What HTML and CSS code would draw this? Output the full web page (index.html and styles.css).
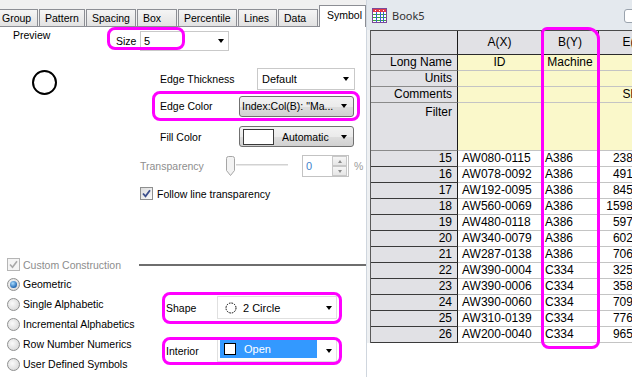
FILE: index.html
```html
<!DOCTYPE html>
<html>
<head>
<meta charset="utf-8">
<link rel="stylesheet" href="styles.css">
</head>
<body>
<div class="app">
  <section class="dlg">
    <div class="tabs">
      <div class="tab t-group">Group</div>
      <div class="tab t-pattern">Pattern</div>
      <div class="tab t-spacing">Spacing</div>
      <div class="tab t-box">Box</div>
      <div class="tab t-perc">Percentile</div>
      <div class="tab t-lines">Lines</div>
      <div class="tab t-data">Data</div>
      <div class="tab t-symbol sel">Symbol</div>
    </div>
    <div class="page">
      <div class="size-row">
        <span class="preview-lbl">Preview</span>
        <span class="size-lbl">Size</span>
        <div class="combo size-combo"><span class="val">5</span><span class="arr"></span></div>
      </div>
      <div class="main">
        <div class="preview">
          <svg width="27" height="27" viewBox="0 0 27 27"><circle cx="13.5" cy="13.5" r="11.5" fill="none" stroke="#000" stroke-width="2"/></svg>
        </div>
        <div class="form">
          <div class="frow r1"><span class="flbl w117">Edge Thickness</span><div class="combo thick"><span class="val">Default</span><span class="arr"></span></div></div>
          <div class="frow r2"><span class="flbl w99">Edge Color</span><div class="btn"><span class="val">Index:Col(B): "Ma...</span><span class="arr"></span></div></div>
          <div class="frow r3"><span class="flbl w99">Fill Color</span><div class="btn"><span class="swatch"></span><span class="val auto">Automatic</span><span class="arr"></span></div></div>
          <div class="frow r4">
            <span class="flbl tl">Transparency</span>
            <div class="slider">
              <svg class="thumb" width="11" height="21" viewBox="0 0 11 21"><path d="M1.5 2.5 Q1.5 0.5 3.5 0.5 H7.5 Q9.5 0.5 9.5 2.5 V14.5 L5.5 19.5 L1.5 14.5 Z" fill="#f3f3f3" stroke="#a6a6a6"/></svg>
              <span class="track"></span>
            </div>
            <div class="spin"><span class="sval">0</span><span class="sbtns"><span class="sb"><span class="up"></span></span><span class="sb"><span class="dn"></span></span></span></div>
            <span class="pct">%</span>
          </div>
          <div class="frow r5">
            <span class="chk"><svg width="11" height="11" viewBox="0 0 11 11"><path d="M2 5.5 L4.5 8.3 L9 2.2" fill="none" stroke="#3c4f8c" stroke-width="1.8"/></svg></span>
            <span class="chk-lbl">Follow line transparency</span>
          </div>
        </div>
      </div>
      <div class="cc-row">
        <span class="chk dis"><svg width="11" height="11" viewBox="0 0 11 11"><path d="M2 5.5 L4.5 8.3 L9 2.2" fill="none" stroke="#a8a8a8" stroke-width="1.6"/></svg></span>
        <span class="cc-lbl">Custom Construction</span>
        <span class="cc-line"></span>
      </div>
      <div class="lower">
        <div class="radios">
          <div class="radio-row"><span class="radio on"></span><span class="rlbl">Geometric</span></div>
          <div class="radio-row"><span class="radio"></span><span class="rlbl">Single Alphabetic</span></div>
          <div class="radio-row"><span class="radio"></span><span class="rlbl">Incremental Alphabetics</span></div>
          <div class="radio-row"><span class="radio"></span><span class="rlbl">Row Number Numerics</span></div>
          <div class="radio-row"><span class="radio"></span><span class="rlbl">User Defined Symbols</span></div>
        </div>
        <div class="shapes">
          <div class="srow">
            <span class="slbl">Shape</span>
            <div class="scombo">
              <svg class="sicon" width="12" height="12" viewBox="0 0 12 12"><circle cx="6" cy="6" r="5" fill="none" stroke="#000" stroke-width="1" stroke-dasharray="1.6 1"/></svg>
              <span class="stext">2 Circle</span>
              <span class="arr"></span>
            </div>
          </div>
          <div class="srow s2">
            <span class="slbl">Interior</span>
            <div class="scombo">
              <span class="hl"><span class="sq"></span><span class="otext">Open</span></span>
              <span class="arr"></span>
            </div>
          </div>
        </div>
      </div>
    </div>
  </section>
  <section class="sheet">
    <div class="titlebar">
      <svg class="bookicon" width="15" height="15" viewBox="0 0 15 15">
        <rect x="0.5" y="0.5" width="14" height="14" fill="#fff" stroke="#7b4a9a"/>
        <rect x="1" y="1" width="13" height="3" fill="#e23a4a"/>
        <path d="M3 2.5h1M7 2.5h1M11 2.5h1" stroke="#fff"/>
        <path d="M1 6.5h13M1 9.5h13M1 12.5h13" stroke="#3caa3c"/>
        <path d="M4.5 4v10M8.5 4v10M11.5 4v10" stroke="#3b5bd8"/>
      </svg>
      <span class="btitle">Book5</span>
      <span class="minbtn"></span>
    </div>
    <div class="gridarea">
      <div class="grid">
        <div class="row hdr"><div class="c rh"></div><div class="c ch ca">A(X)</div><div class="c ch cb">B(Y)</div><div class="c ch cc">E(Y)</div></div>
        <div class="row lab"><div class="c rh">Long Name</div><div class="c ly ca ctr">ID</div><div class="c ly cb ctr">Machine</div><div class="c ly cc ctr"></div></div>
        <div class="row lab"><div class="c rh">Units</div><div class="c ly ca"></div><div class="c ly cb"></div><div class="c ly cc"></div></div>
        <div class="row lab"><div class="c rh">Comments</div><div class="c ly ca"></div><div class="c ly cb"></div><div class="c ly cc ctr">Shift</div></div>
        <div class="row lab filter"><div class="c rh top">Filter</div><div class="c ly ca"></div><div class="c ly cb"></div><div class="c ly cc"></div></div>
        <div class="row dat"><div class="c rh">15</div><div class="c d ca">AW080-0115</div><div class="c d cb">A386</div><div class="c d cc num">238.4167</div></div>
        <div class="row dat"><div class="c rh">16</div><div class="c d ca">AW078-0092</div><div class="c d cb">A386</div><div class="c d cc num">491.2500</div></div>
        <div class="row dat"><div class="c rh">17</div><div class="c d ca">AW192-0095</div><div class="c d cb">A386</div><div class="c d cc num">845.0833</div></div>
        <div class="row dat"><div class="c rh">18</div><div class="c d ca">AW560-0069</div><div class="c d cb">A386</div><div class="c d cc num">1598.3333</div></div>
        <div class="row dat"><div class="c rh">19</div><div class="c d ca">AW480-0118</div><div class="c d cb">A386</div><div class="c d cc num">597.1667</div></div>
        <div class="row dat"><div class="c rh">20</div><div class="c d ca">AW340-0079</div><div class="c d cb">A386</div><div class="c d cc num">602.4167</div></div>
        <div class="row dat"><div class="c rh">21</div><div class="c d ca">AW287-0138</div><div class="c d cb">A386</div><div class="c d cc num">706.8333</div></div>
        <div class="row dat"><div class="c rh">22</div><div class="c d ca">AW390-0004</div><div class="c d cb">C334</div><div class="c d cc num">325.9167</div></div>
        <div class="row dat"><div class="c rh">23</div><div class="c d ca">AW390-0006</div><div class="c d cb">C334</div><div class="c d cc num">358.7500</div></div>
        <div class="row dat"><div class="c rh">24</div><div class="c d ca">AW390-0060</div><div class="c d cb">C334</div><div class="c d cc num">709.3333</div></div>
        <div class="row dat"><div class="c rh">25</div><div class="c d ca">AW310-0139</div><div class="c d cb">C334</div><div class="c d cc num">776.2500</div></div>
        <div class="row dat"><div class="c rh">26</div><div class="c d ca">AW200-0040</div><div class="c d cb">C334</div><div class="c d cc num">965.4167</div></div>
      </div>
    </div>
  </section>
</div>
<div class="mark m-size"></div>
<div class="mark m-edge"></div>
<div class="mark m-shape"></div>
<div class="mark m-interior"></div>
<div class="mark m-col"></div>
</body>
</html>
```

FILE: styles.css
```css
* { box-sizing: border-box; }
html, body { margin: 0; padding: 0; }
body {
  width: 632px; height: 377px; overflow: hidden; position: relative;
  font-family: "Liberation Sans", Arial, sans-serif; font-size: 10.5px;
  color: #000; background: #fff;
}
.app { display: flex; height: 377px; }

/* ---------- dialog ---------- */
.dlg { width: 367px; flex: none; display: flex; flex-direction: column; border-right: 1px solid #cfd6de; background: #fff; }
.tabs { height: 27px; background: #f0f0f0; display: flex; align-items: flex-end; gap: 1px; border-bottom: 1px solid #8c8e94; }
.tab {
  height: 17px; display: flex; align-items: center; padding-left: 5px;
  border: 1px solid #8c8e94; border-bottom: none;
  background: linear-gradient(#f5f5f5, #e2e2e2); white-space: nowrap; flex: none;
}
.t-group { width: 38px; border-left: none; padding-left: 2px; }
.t-pattern { width: 46px; }
.t-spacing { width: 50px; }
.t-box { width: 40px; }
.t-perc { width: 59px; }
.t-lines { width: 39px; }
.t-data { width: 40px; }
.t-symbol { width: 47px; }
.tab.sel { height: 22px; margin-bottom: -1px; background: #fff; padding-left: 7px; padding-bottom: 4px; }

.page { flex: 1; }
.size-row { display: flex; height: 19px; margin-top: 4px; }
.preview-lbl { width: 116px; padding-left: 13px; line-height: 13px; margin-top: -2px; align-self: flex-start; }
.size-lbl { width: 24px; align-self: center; padding-top: 1px; }
.combo { display: flex; align-items: center; border: 1px solid #c9c9c9; background: #fff; padding: 0 5px 0 3px; }
.combo .val { flex: 1; }
.size-combo { width: 89px; height: 20px; padding-right: 4px; font-size: 11px; }
.arr { width: 0; height: 0; border-left: 3.5px solid transparent; border-right: 3.5px solid transparent; border-top: 4px solid #000; flex: none; }

.main { display: flex; margin-top: 18px; }
.preview { width: 140px; padding: 1px 0 0 31px; flex: none; }
.preview svg { display: block; }
.form { width: 226px; display: flex; flex-direction: column; }
.frow { display: flex; align-items: center; }
.flbl { flex: none; }
.w117 { width: 117px; padding-left: 20px; }
.w99 { width: 99px; padding-left: 20px; }
.r1 { height: 22px; }
.thick { width: 98px; height: 22px; padding-left: 4px; padding-right: 5px; font-size: 11px; }
.r2 { height: 22px; margin-top: 5px; }
.r3 { height: 21px; margin-top: 9px; }
.btn {
  width: 115px; height: 21px; display: flex; align-items: center;
  border: 1px solid #707070; border-radius: 3px;
  background: linear-gradient(#f3f3f3 0%, #ebebeb 50%, #dedede 50%, #d0d0d0 100%);
  padding: 0 6px 0 2px; white-space: nowrap;
}
.btn .val { flex: 1; overflow: hidden; }
.swatch { width: 31px; height: 16px; background: #fff; border: 1px solid #3a3a3a; margin-left: 1px; margin-right: 8px; flex: none; }
.r4 { height: 22px; margin-top: 8px; }
.tl { width: 85px; color: #8e8e8e; }
.slider { width: 63px; display: flex; align-items: center; margin-right: 14px; flex: none; }
.thumb { display: block; flex: none; }
.track { flex: 1; height: 2px; background: #d2d2d2; border-bottom: 1px solid #e8e8e8; margin-top: -3px; }
.spin { width: 47px; height: 22px; border: 1px solid #c3c3c3; display: flex; align-items: center; padding-left: 3px; flex: none; }
.sval { flex: 1; color: #3f82cc; font-size: 11px; }
.sbtns { display: flex; flex-direction: column; width: 15px; margin-right: 1px; gap: 0; }
.sb { height: 10px; border: 1px solid #c8c8c8; background: linear-gradient(#f6f6f6, #e6e6e6); display: flex; align-items: center; justify-content: center; }
.up { width: 0; height: 0; border-left: 2.5px solid transparent; border-right: 2.5px solid transparent; border-bottom: 3px solid #8a8a8a; }
.dn { width: 0; height: 0; border-left: 2.5px solid transparent; border-right: 2.5px solid transparent; border-top: 3px solid #8a8a8a; }
.pct { margin-left: 5px; color: #9a9a9a; }
.r5 { height: 13px; margin-top: 10px; }
.chk {
  width: 13px; height: 13px; border: 1px solid #8e8f8f; flex: none;
  background: linear-gradient(135deg, #dcdcdc, #fbfbfb);
  display: flex; align-items: center; justify-content: center;
}
.chk svg { display: block; }
.chk.dis { border-color: #b5b5b5; background: #f4f4f4; }
.chk-lbl { margin-left: 4px; }

.cc-row { display: flex; align-items: center; height: 13px; margin-top: 58px; padding-left: 7px; }
.cc-lbl { width: 116px; margin-left: 3px; color: #8d8d8d; flex: none; }
.cc-line { flex: 1; height: 2px; background: #6e6e6e; margin-top: 1px; }

.lower { display: flex; margin-top: 3px; }
.radios { width: 166px; padding-left: 7px; flex: none; }
.radio-row { height: 20px; display: flex; align-items: center; }
.radio {
  width: 13px; height: 13px; border-radius: 50%; border: 1px solid #8e8f8f; flex: none;
  background: radial-gradient(circle at 40% 40%, #fafafa, #d2d2d2);
  display: flex; align-items: center; justify-content: center;
}
.radio.on::after {
  content: ""; width: 7px; height: 7px; border-radius: 50%;
  background: radial-gradient(circle at 40% 35%, #a8dcff, #2a6fb8 65%, #184f8c);
}
.rlbl { margin-left: 3px; white-space: nowrap; }
.shapes { margin-top: 22px; }
.srow { display: flex; align-items: center; height: 23px; }
.s2 { margin-top: 20px; }
.slbl { width: 51px; flex: none; }
.scombo { width: 120px; height: 23px; border: 1px solid #e0e0e0; display: flex; align-items: center; padding: 0 4px 0 7px; font-size: 11px; }
.sicon { display: block; flex: none; }
.stext { margin-left: 6px; flex: 1; }
.s2 .scombo { padding-left: 2px; align-items: flex-start; padding-top: 0; }
.s2 .scombo .arr { align-self: center; }
.hl { width: 97px; height: 18px; background: #3399ff; display: flex; align-items: center; padding-left: 4px; margin-right: auto; }
.sq { width: 12px; height: 12px; background: #fff; border: 1px solid #000; flex: none; }
.otext { color: #fff; margin-left: 8px; }

/* ---------- worksheet ---------- */
.sheet { flex: 1; display: flex; flex-direction: column; overflow: hidden; background: #fff; }
.titlebar { height: 30px; background: #e4e9ee; display: flex; align-items: center; padding-left: 5px; flex: none; }
.bookicon { display: block; flex: none; margin-top: 1px; }
.btitle { font-family: "Noto Sans", "Open Sans", sans-serif; font-size: 11px; color: #333; margin-left: 5px; }
.minbtn { margin-left: auto; margin-right: -10px; width: 18px; height: 14px; border: 1px solid #9aa3ad; border-radius: 3px; background: #fff; flex: none; margin-top: 1px; }
.gridarea { flex: 1; }
.grid {
  margin-left: 3px; border-left: 1px solid #5a5a5a; border-top: 1px solid #4a4a4a;
  box-shadow: -3px 0 0 #eef0f2; width: 300px;
  font-family: "Liberation Sans", Arial, sans-serif; font-size: 12px;
}
.row { display: flex; height: 16px; }
.row.hdr { height: 24px; }
.row.filter { height: 48px; }
.c { height: 100%; border-right: 1px solid #c4c4c4; border-bottom: 1px solid #c4c4c4; display: flex; align-items: center; white-space: nowrap; overflow: hidden; flex: none; line-height: 15px; }
.rh { width: 87px; background: #e1e1e5; border-right-color: #1a1a1a; border-bottom-color: #3a3a3a; justify-content: flex-end; padding-right: 5px; }
.lab .rh { border-bottom-color: #8a8a8a; }
.rh.top { align-items: flex-start; padding-top: 2px; }
.ca { width: 84px; }
.cb { width: 57px; }
.cc { width: 72px; }
.ch { background: #e1e1e5; border-right-color: #2a2a2a; border-bottom-color: #2a2a2a; justify-content: center; }
.ly { background: #faf8ca; }
.ctr { justify-content: center; }
.d.ca { padding-left: 4px; }
.d.cb { padding-left: 3px; }
.num { justify-content: flex-end; padding-right: 7px; }

/* ---------- annotation marks ---------- */
.mark { position: absolute; border: 3px solid #ff00ff; border-radius: 8px; pointer-events: none; }
.m-size { left: 107px; top: 27px; width: 78px; height: 23px; }
.m-edge { left: 152px; top: 91px; width: 208px; height: 30px; }
.m-shape { left: 162px; top: 292px; width: 180px; height: 32px; }
.m-interior { left: 162px; top: 337px; width: 180px; height: 28px; }
.m-col { left: 541px; top: 27px; width: 59px; height: 322px; border-radius: 6px 12px 8px 8px; }
```
